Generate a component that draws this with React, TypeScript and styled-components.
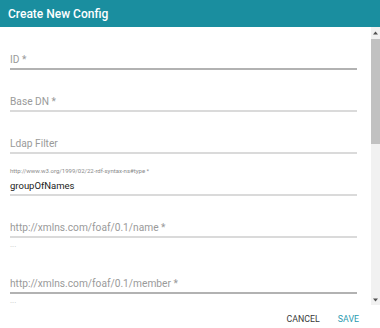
import React from "react";
import styled, { createGlobalStyle } from "styled-components";

const GlobalStyle = createGlobalStyle`
  html, body {
    margin: 0;
    padding: 0;
    background: #ffffff;
    font-family: Roboto, "Liberation Sans", Arial, sans-serif;
  }
`;

const Dialog = styled.div`
  width: 380px;
  height: 328px;
  display: flex;
  flex-direction: column;
  background: #fff;
  overflow: hidden;
`;

const Header = styled.div`
  height: 27px;
  flex: none;
  display: flex;
  align-items: center;
  padding: 0 8px;
  background: #1a8e9f;
  color: #fff;
  font-size: 12px;
  font-weight: 500;
`;

const BodyRow = styled.div`
  flex: 1;
  min-height: 0;
  display: flex;
`;

const Body = styled.div`
  flex: 1;
  min-width: 0;
  overflow: hidden;
  padding: 1px 14px 0 10px;
`;

const ScrollTrack = styled.div`
  width: 9px;
  flex: none;
  display: flex;
  flex-direction: column;
  background: #f1f1f1;
  padding-top: 1px;
`;

const ScrollButton = styled.div`
  height: 10px;
  flex: none;
  display: flex;
  align-items: center;
  justify-content: center;
`;

const ScrollThumb = styled.div`
  height: 105px;
  margin-top: 1px;
  background: #c1c1c1;
`;

const Spacer = styled.div`
  flex: 1;
`;

const Field = styled.div`
  display: flex;
  flex-direction: column;
  padding-top: 12px;
`;

const SmallLabel = styled.div`
  height: 12px;
  line-height: 10px;
  font-size: 6px;
  color: #8a8a8a;
  white-space: nowrap;
`;

const InputRow = styled.div<{ $filled?: boolean; $dark?: boolean }>`
  height: 16px;
  line-height: 16px;
  font-size: ${(p) => (p.$filled ? "9.5px" : "10.2px")};
  color: ${(p) => (p.$filled ? "#222" : "#9a9a9a")};
  border-bottom: 2px solid ${(p) => (p.$dark ? "#b2b2b2" : "#dadada")};
  white-space: nowrap;
`;

const Helper = styled.div`
  height: 14px;
  line-height: 14px;
  font-size: 8px;
  color: #c4c4c4;
`;

const Footer = styled.div`
  height: 23px;
  flex: none;
  display: flex;
  justify-content: flex-end;
  align-items: center;
  gap: 18px;
  padding: 4px 21px 0 0;
  box-sizing: border-box;
`;

const Button = styled.button<{ $primary?: boolean }>`
  border: none;
  background: transparent;
  padding: 0;
  font-family: inherit;
  font-size: 8.8px;
  text-transform: uppercase;
  color: ${(p) => (p.$primary ? "#2a9bb0" : "#3a3a3a")};
  cursor: pointer;
`;

const Arrow = ({ up }: { up?: boolean }) => (
  <svg width="5" height="4" viewBox="0 0 5 4">
    <path d={up ? "M0 3.5 L5 3.5 L2.5 0.5 Z" : "M0 0.5 L5 0.5 L2.5 3.5 Z"} fill="#505050" />
  </svg>
);

type FieldDef = {
  label: string;
  value?: string;
  helper?: boolean;
  dark?: boolean;
};

const fields: FieldDef[] = [
  { label: "ID *", dark: true },
  { label: "Base DN *" },
  { label: "Ldap Filter" },
  { label: "http://www.w3.org/1999/02/22-rdf-syntax-ns#type *", value: "groupOfNames" },
  { label: "http://xmlns.com/foaf/0.1/name *", helper: true },
  { label: "http://xmlns.com/foaf/0.1/member *", helper: true, dark: true },
];

export default function App() {
  return (
    <>
      <GlobalStyle />
      <Dialog>
        <Header>Create New Config</Header>
        <BodyRow>
          <Body>
            {fields.map((f) => (
              <Field key={f.label}>
                <SmallLabel>{f.value ? f.label : ""}</SmallLabel>
                <InputRow $filled={!!f.value} $dark={f.dark}>
                  {f.value ?? f.label}
                </InputRow>
                {f.helper && <Helper>...</Helper>}
              </Field>
            ))}
          </Body>
          <ScrollTrack>
            <ScrollButton>
              <Arrow up />
            </ScrollButton>
            <ScrollThumb />
            <Spacer />
            <ScrollButton>
              <Arrow />
            </ScrollButton>
          </ScrollTrack>
        </BodyRow>
        <Footer>
          <Button>Cancel</Button>
          <Button $primary>Save</Button>
        </Footer>
      </Dialog>
    </>
  );
}
